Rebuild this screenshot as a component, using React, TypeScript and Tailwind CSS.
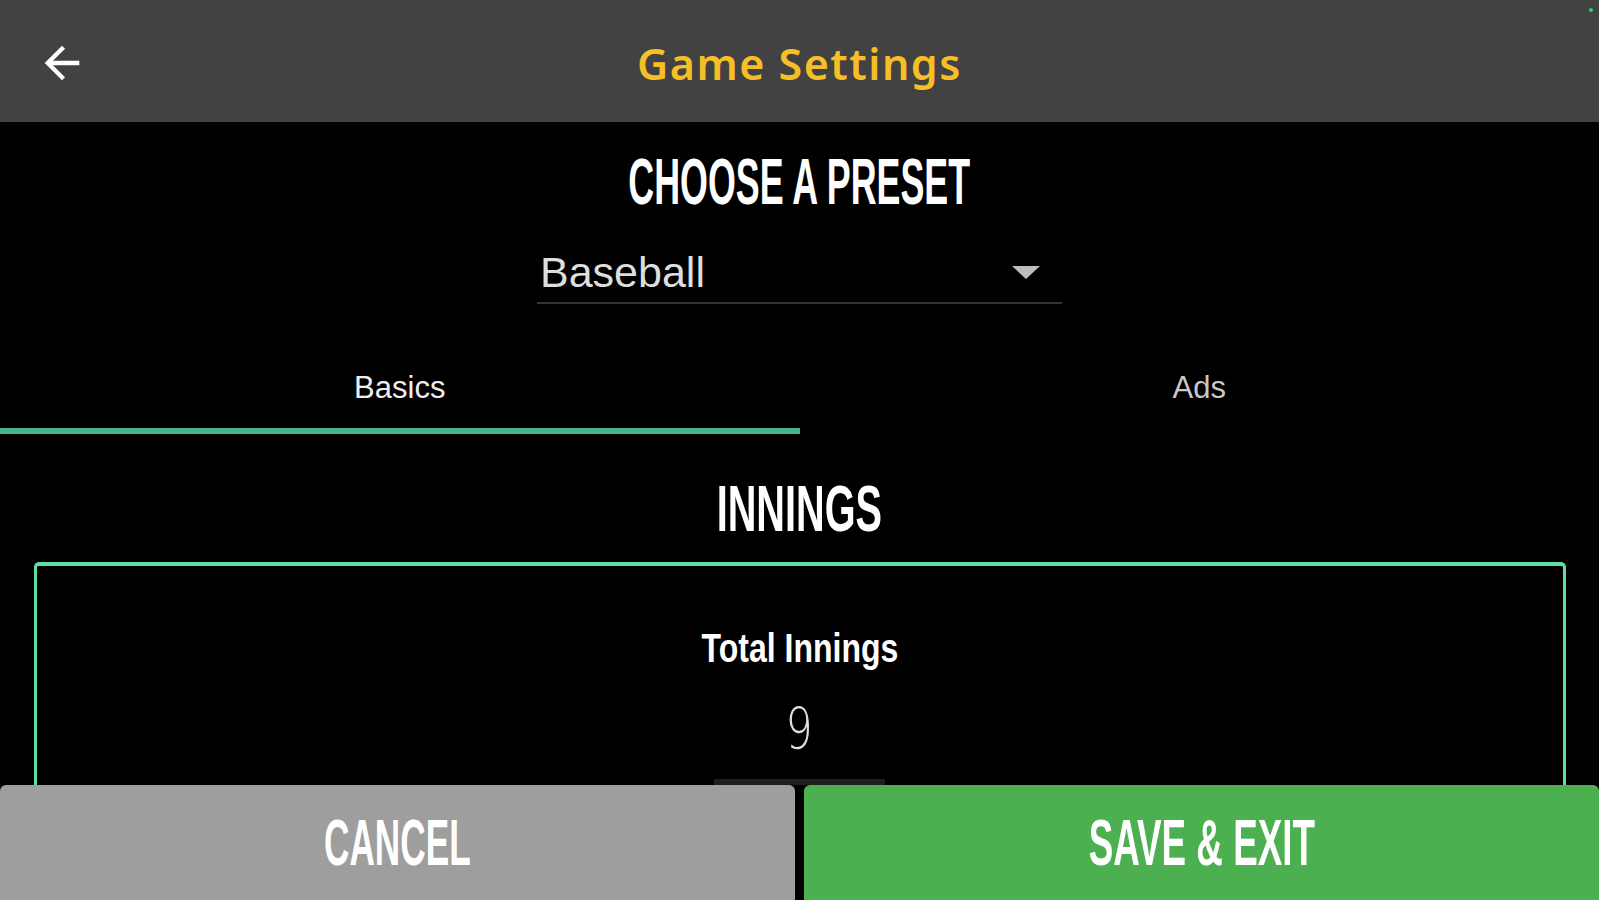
import React from 'react';

const condensed = { fontFamily: '"Liberation Sans", Arial, sans-serif' };

function BackArrow() {
  return (
    <svg viewBox="0 0 24 24" className="h-[52px] w-[52px] fill-white">
      <path d="M20 11H7.83l5.59-5.59L12 4l-8 8 8 8 1.41-1.41L7.83 13H20v-2z" />
    </svg>
  );
}

export default function App() {
  return (
    <div className="relative h-[900px] w-full overflow-hidden bg-black text-white">
      {/* top bar */}
      <header className="relative flex h-[122px] items-center justify-center bg-[#424242]">
        <button className="absolute left-[36px] top-[37px] flex items-center justify-center">
          <BackArrow />
        </button>
        <h1
          className="mt-[5px] text-[43px] font-semibold leading-none tracking-[1.5px] text-[#f6bf26]"
          style={{ fontFamily: '"Noto Sans", "Open Sans", sans-serif' }}
        >
          Game Settings
        </h1>
        <span className="absolute right-[6px] top-[8px] h-[4px] w-[4px] rounded-full bg-[#2fd06a]" />
      </header>

      <main className="flex flex-col items-center">
        <h2
          className="mt-[28px] inline-block h-[64px] scale-x-[0.56] text-[64px] font-bold leading-none"
          style={condensed}
        >
          CHOOSE A PRESET
        </h2>

        {/* preset select */}
        <div className="mt-[28px] flex h-[62px] w-[525px] items-center justify-between border-b-2 border-[#333] pl-[3px] pr-[22px]">
          <span
            className="text-[43px] leading-none text-[#dedede]"
            style={{ fontFamily: '"Liberation Sans", Arial, sans-serif' }}
          >
            Baseball
          </span>
          <span className="h-0 w-0 border-x-[14px] border-t-[13px] border-x-transparent border-t-[#bdbdbd]" />
        </div>

        {/* tabs */}
        <div className="mt-[68px] grid w-full grid-cols-2">
          <div className="flex flex-col items-center">
            <span
              className="h-[31px] text-[31px] leading-none text-[#eeeeee]"
              style={{ fontFamily: '"Liberation Sans", Arial, sans-serif' }}
            >
              Basics
            </span>
            <div className="mt-[25px] h-[6px] w-full bg-[#45b68c]" />
          </div>
          <div className="flex flex-col items-center">
            <span
              className="h-[31px] text-[31px] leading-none text-[#c8c8c8]"
              style={{ fontFamily: '"Liberation Sans", Arial, sans-serif' }}
            >
              Ads
            </span>
            <div className="mt-[25px] h-[6px] w-full" />
          </div>
        </div>

        <h2
          className="mt-[43px] inline-block h-[64px] scale-x-[0.62] text-[64px] font-bold leading-none"
          style={condensed}
        >
          INNINGS
        </h2>

        {/* innings card */}
        <section className="mt-[21px] flex w-[1532px] flex-col items-center rounded-[5px] border-[3px] border-t-4 border-[#5edfa0] pb-[200px] pt-[62px]">
          <h3
            className="inline-block h-[40px] scale-x-[0.8] text-[40px] font-bold leading-none"
            style={condensed}
          >
            Total Innings
          </h3>
          <div className="mt-[33px] flex w-[171px] justify-center border-b-[6px] border-[#1e1e1e] pb-[20px]">
            <span
              className="inline-block h-[58px] scale-x-[0.75] text-[57px] font-extralight leading-none text-[#e0e0e0]"
              style={{ fontFamily: '"DejaVu Sans", sans-serif' }}
            >
              9
            </span>
          </div>
        </section>
      </main>

      {/* action bar */}
      <footer className="absolute inset-x-0 bottom-0 flex h-[115px] gap-[9px]">
        <button className="flex flex-1 items-center justify-center rounded-t-[6px] bg-[#9e9e9e]">
          <span className="inline-block scale-x-[0.55] text-[64px] font-bold leading-none text-white" style={condensed}>
            CANCEL
          </span>
        </button>
        <button className="flex flex-1 items-center justify-center rounded-t-[6px] bg-[#4caf50]">
          <span className="inline-block scale-x-[0.575] text-[64px] font-bold leading-none text-white" style={condensed}>
            SAVE &amp; EXIT
          </span>
        </button>
      </footer>
    </div>
  );
}
